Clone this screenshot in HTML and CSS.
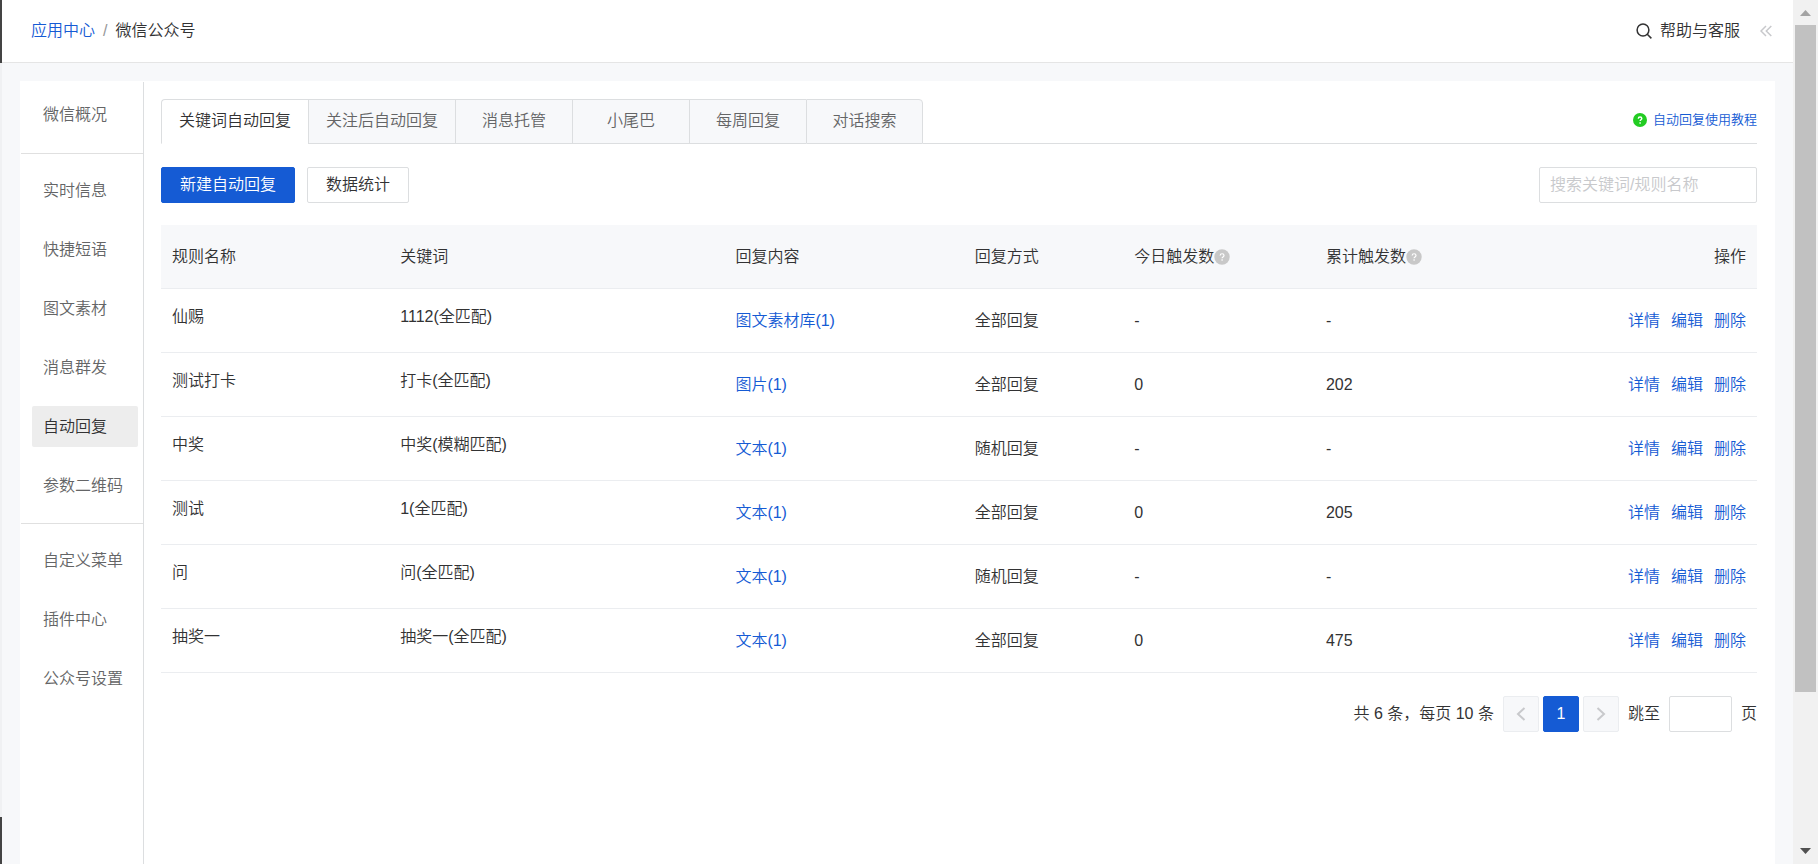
FILE: index.html
```
<!DOCTYPE html>
<html lang="zh-CN">
<head>
    <meta charset="UTF-8">
    <meta name="viewport" content="width=device-width, initial-scale=1.0">
    <title>微信公众号</title>
    <link rel="stylesheet" href="styles.css">
</head>
<body>
    <div class="edge"></div>

    <div class="main">
        <header class="header">
            <nav class="breadcrumb">
                <a href="#">应用中心</a>
                <span class="slash">/</span>
                <span>微信公众号</span>
            </nav>
            <div class="header-right">
                <button type="button" class="help">
                    <svg width="16" height="16" viewBox="0 0 16 16" fill="none" stroke="#323233" stroke-width="1.5"><circle cx="7" cy="7" r="5.9"/><path d="M11 11l4.4 4.4"/></svg>
                    帮助与客服
                </button>
                <button type="button" class="collapse" aria-label="收起">
                    <svg width="12" height="12" viewBox="0 0 12 12" fill="none" stroke="#c8c9cc" stroke-width="1.5"><path d="M6 1L1 6l5 5M11.300 1l-5 5 5 5"/></svg>
                </button>
            </div>
        </header>

        <div class="panel">
            <nav class="sidebar">
                <div class="group first">
                    <a href="#">微信概况</a>
                </div>
                <div class="group">
                    <a href="#">实时信息</a>
                    <a href="#">快捷短语</a>
                    <a href="#">图文素材</a>
                    <a href="#">消息群发</a>
                    <a href="#" class="active">自动回复</a>
                    <a href="#">参数二维码</a>
                </div>
                <div class="group">
                    <a href="#">自定义菜单</a>
                    <a href="#">插件中心</a>
                    <a href="#">公众号设置</a>
                </div>
            </nav>

            <main class="content">
                <div class="tabs">
                    <a href="#" class="tab active">关键词自动回复</a>
                    <a href="#" class="tab">关注后自动回复</a>
                    <a href="#" class="tab">消息托管</a>
                    <a href="#" class="tab">小尾巴</a>
                    <a href="#" class="tab">每周回复</a>
                    <a href="#" class="tab">对话搜索</a>
                    <div class="tabs-rest">
                        <a href="#" class="tutorial">
                            <svg width="14" height="14" viewBox="0 0 14 14"><circle cx="7" cy="7" r="7" fill="#2c2"/><path d="M5.300 5.700c0-2.300 3.500-2.200 3.500-.1 0 1.200-1.700 1.200-1.700 2.500M7.100 9.300v1.500" fill="none" stroke="#fff" stroke-width="1.4"/></svg>
                            自动回复使用教程
                        </a>
                    </div>
                </div>

                <div class="toolbar">
                    <button type="button" class="btn primary">新建自动回复</button>
                    <button type="button" class="btn">数据统计</button>
                    <input type="text" class="search" placeholder="搜索关键词/规则名称" aria-label="搜索关键词/规则名称">
                </div>

                <table class="rules">
                    <thead>
                        <tr>
                            <th class="col-name">规则名称</th>
                            <th class="col-keyword">关键词</th>
                            <th class="col-reply">回复内容</th>
                            <th class="col-mode">回复方式</th>
                            <th class="col-today"><span class="tip">今日触发数<svg width="16" height="16" viewBox="0 0 16 16"><circle cx="8" cy="8" r="7.700" fill="#c8c8c8"/><path d="M6.200 6.600c0-2.500 3.800-2.400 3.800-.1 0 1.400-1.900 1.400-1.900 2.700M8.100 10.300v1.500" fill="none" stroke="#fff" stroke-width="1.200"/></svg></span></th>
                            <th class="col-total"><span class="tip">累计触发数<svg width="16" height="16" viewBox="0 0 16 16"><circle cx="8" cy="8" r="7.700" fill="#c8c8c8"/><path d="M6.200 6.600c0-2.500 3.800-2.400 3.800-.1 0 1.400-1.900 1.400-1.900 2.700M8.100 10.300v1.500" fill="none" stroke="#fff" stroke-width="1.200"/></svg></span></th>
                            <th class="actions">操作</th>
                        </tr>
                    </thead>
                    <tbody>
                        <tr>
                            <td class="top">仙赐</td>
                            <td class="top">1112(全匹配)</td>
                            <td><a href="#">图文素材库(1)</a></td>
                            <td>全部回复</td>
                            <td>-</td>
                            <td>-</td>
                            <td class="actions"><a href="#">详情</a><a href="#">编辑</a><a href="#">删除</a></td>
                        </tr>
                        <tr>
                            <td class="top">测试打卡</td>
                            <td class="top">打卡(全匹配)</td>
                            <td><a href="#">图片(1)</a></td>
                            <td>全部回复</td>
                            <td>0</td>
                            <td>202</td>
                            <td class="actions"><a href="#">详情</a><a href="#">编辑</a><a href="#">删除</a></td>
                        </tr>
                        <tr>
                            <td class="top">中奖</td>
                            <td class="top">中奖(模糊匹配)</td>
                            <td><a href="#">文本(1)</a></td>
                            <td>随机回复</td>
                            <td>-</td>
                            <td>-</td>
                            <td class="actions"><a href="#">详情</a><a href="#">编辑</a><a href="#">删除</a></td>
                        </tr>
                        <tr>
                            <td class="top">测试</td>
                            <td class="top">1(全匹配)</td>
                            <td><a href="#">文本(1)</a></td>
                            <td>全部回复</td>
                            <td>0</td>
                            <td>205</td>
                            <td class="actions"><a href="#">详情</a><a href="#">编辑</a><a href="#">删除</a></td>
                        </tr>
                        <tr>
                            <td class="top">问</td>
                            <td class="top">问(全匹配)</td>
                            <td><a href="#">文本(1)</a></td>
                            <td>随机回复</td>
                            <td>-</td>
                            <td>-</td>
                            <td class="actions"><a href="#">详情</a><a href="#">编辑</a><a href="#">删除</a></td>
                        </tr>
                        <tr>
                            <td class="top">抽奖一</td>
                            <td class="top">抽奖一(全匹配)</td>
                            <td><a href="#">文本(1)</a></td>
                            <td>全部回复</td>
                            <td>0</td>
                            <td>475</td>
                            <td class="actions"><a href="#">详情</a><a href="#">编辑</a><a href="#">删除</a></td>
                        </tr>
                    </tbody>
                </table>

                <div class="pagination">
                    <span>共 6 条，每页 10 条</span>
                    <div class="pages">
                        <button type="button" disabled aria-label="上一页">
                            <svg width="10" height="14" viewBox="0 0 10 14" fill="none" stroke="#c8c9cc" stroke-width="2"><path d="M8.500 1L2 7l6.500 6"/></svg>
                        </button>
                        <button type="button" class="current">1</button>
                        <button type="button" disabled aria-label="下一页">
                            <svg width="10" height="14" viewBox="0 0 10 14" fill="none" stroke="#c8c9cc" stroke-width="2"><path d="M1.500 1L8 7l-6.500 6"/></svg>
                        </button>
                    </div>
                    <label for="jump">跳至</label>
                    <input type="text" id="jump">
                    <span>页</span>
                </div>
            </main>
        </div>
    </div>

    <div class="scrollbar">
        <svg class="arrow" viewBox="0 0 25 25"><path d="M7 16h11l-5.500-6z" fill="#a3a3a3"/></svg>
        <div class="track"><div class="thumb"></div></div>
        <svg class="arrow" viewBox="0 0 25 25"><path d="M7 9h11l-5.500 6z" fill="#505050"/></svg>
    </div>
</body>
</html>
```

FILE: styles.css
```
* {
    box-sizing: border-box;
}
body {
    margin: 0;
    height: 100vh;
    display: flex;
    overflow: hidden;
    background: #f7f8fa;
    color: #323233;
    font-family: "Liberation Sans", "Noto Sans CJK SC", sans-serif;
    font-size: 16px;
    font-weight: 350;
    line-height: 24px;
}
button, input {
    font: inherit;
    color: inherit;
}
button {
    cursor: pointer;
}
a {
    color: #155bd4;
    text-decoration: none;
}
svg {
    flex: none;
}

/* sliver of the dark app menu on the left */
.edge {
    width: 2px;
    display: flex;
    flex-direction: column;
    justify-content: space-between;
    background: #f0f1f3;
}
.edge::before, .edge::after {
    content: "";
    height: 63px;
    background: #444;
}
.edge::after {
    height: 47px;
}

.main {
    flex: 1;
    min-width: 0;
    display: flex;
    flex-direction: column;
}
.header {
    height: 63px;
    flex: none;
    display: flex;
    justify-content: space-between;
    align-items: center;
    padding: 0 21px 0 29px;
    background: #fff;
    border-bottom: 1px solid #e5e5e5;
}
.breadcrumb {
    display: flex;
    gap: 8px;
}
.slash {
    color: #969799;
}
.header-right {
    display: flex;
    align-items: center;
    gap: 20px;
}
.help, .collapse {
    display: flex;
    align-items: center;
    gap: 8px;
    padding: 0;
    border: none;
    background: none;
}

.panel {
    flex: 1;
    display: flex;
    margin: 18px 18px 0;
    background: #fff;
}
.sidebar {
    width: 123px;
    flex: none;
    margin: 1px 0 0 1px;
    border-right: 1px solid #dcdee0;
}
.group {
    display: flex;
    flex-direction: column;
    gap: 18px;
    padding: 16px 5px 17px 11px;
    border-bottom: 1px solid #e0e0e0;
}
.group.first {
    padding-top: 12px;
    padding-bottom: 18px;
}
.group:last-child {
    border-bottom: none;
}
.sidebar a {
    padding: 0 11px;
    line-height: 41px;
    border-radius: 2px;
    color: #646566;
    white-space: nowrap;
}
.sidebar a.active {
    background: #ededed;
    color: #323233;
}

.content {
    flex: 1;
    min-width: 0;
    padding: 18px 18px 0 17px;
}
.tabs {
    display: flex;
    height: 45px;
}
.tab {
    min-width: 117px;
    padding: 0 17px;
    line-height: 42px;
    text-align: center;
    color: #646566;
    background: #f7f8fa;
    border: 1px solid #dcdee0;
    border-right: none;
    white-space: nowrap;
}
.tab.active {
    color: #323233;
    background: #fff;
    border-bottom-color: #fff;
    border-top-left-radius: 4px;
}
.tab:nth-child(6) {
    border-right: 1px solid #dcdee0;
    border-top-right-radius: 4px;
}
.tabs-rest {
    flex: 1;
    display: flex;
    justify-content: flex-end;
    align-items: center;
    padding-bottom: 2px;
    border-bottom: 1px solid #dcdee0;
}
.tutorial {
    display: flex;
    align-items: center;
    gap: 6px;
    font-size: 13px;
}

.toolbar {
    display: flex;
    gap: 12px;
    margin: 23px 0 22px;
}
.btn {
    height: 36px;
    padding: 0 18px;
    background: #fff;
    border: 1px solid #dcdee0;
    border-radius: 2px;
}
.btn.primary {
    background: #155bd4;
    border-color: #155bd4;
    color: #fff;
}
.search {
    width: 218px;
    height: 36px;
    margin-left: auto;
    padding: 0 10px;
    border: 1px solid #dcdee0;
    border-radius: 2px;
}
.search::placeholder {
    color: #c8c9cc;
}

.rules {
    width: 100%;
    table-layout: fixed;
    border-collapse: separate;
    border-spacing: 0;
}
.rules th, .rules td {
    height: 64px;
    padding: 0 11px;
    text-align: left;
    font-weight: inherit;
    border-bottom: 1px solid #ebedf0;
}
.rules th {
    background: #f7f8fa;
}
.rules td.top {
    padding-top: 16px;
    vertical-align: top;
}
.col-name {
    width: 14.3%;
}
.col-keyword {
    width: 21%;
}
.col-reply {
    width: 15%;
}
.col-mode {
    width: 10%;
}
.col-today {
    width: 12%;
}
.col-total {
    width: 12%;
}
.tip {
    display: flex;
    align-items: center;
}
.rules .actions {
    text-align: right;
}
.actions a + a {
    margin-left: 11px;
}

.pagination {
    display: flex;
    justify-content: flex-end;
    align-items: center;
    gap: 9px;
    margin-top: 23px;
}
.pages {
    display: flex;
    gap: 4px;
}
.pages button {
    width: 36px;
    height: 36px;
    display: flex;
    align-items: center;
    justify-content: center;
    padding: 0;
    background: #f7f8fa;
    border: 1px solid #ebedf0;
    border-radius: 2px;
}
.pages .current {
    background: #155bd4;
    border-color: #155bd4;
    color: #fff;
}
.pagination input {
    width: 63px;
    height: 36px;
    padding: 0 10px;
    border: 1px solid #dcdee0;
    border-radius: 2px;
}

.scrollbar {
    width: 25px;
    flex: none;
    display: flex;
    flex-direction: column;
    background: #f1f1f1;
}
.arrow {
    width: 25px;
    height: 25px;
}
.track {
    flex: 1;
}
.thumb {
    width: 21px;
    height: 82%;
    margin: 0 auto;
    background: #c1c1c1;
}
```
